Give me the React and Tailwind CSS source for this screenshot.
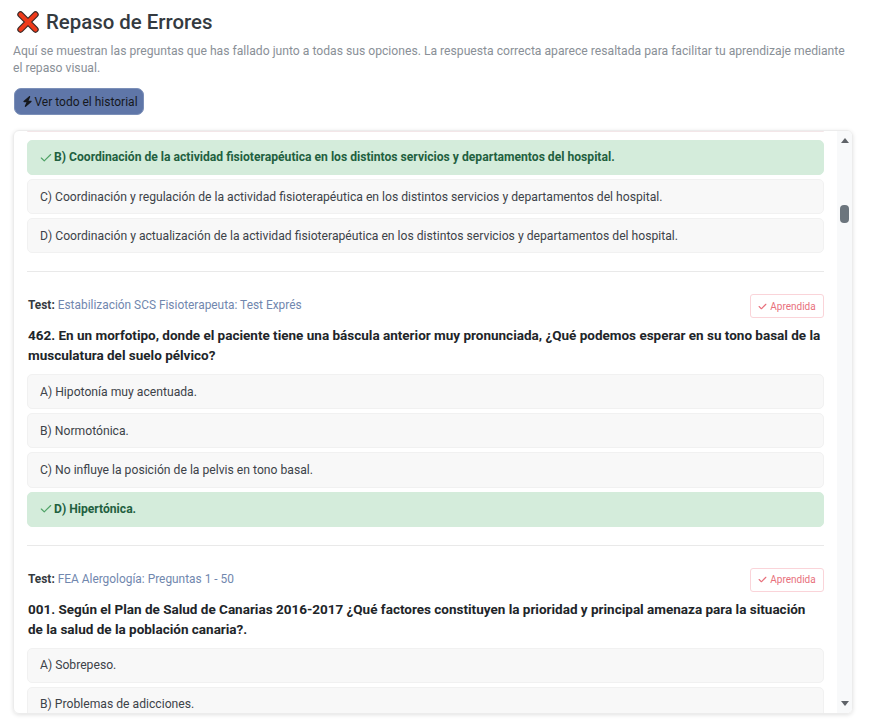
import { FaBolt, FaCheck } from 'react-icons/fa6';
import { Check } from 'lucide-react';

const questions = [
  {
    test: 'Estabilización SCS Fisioterapeuta: Test Exprés',
    title: '462. En un morfotipo, donde el paciente tiene una báscula anterior muy pronunciada, ¿Qué podemos esperar en su tono basal de la musculatura del suelo pélvico?',
    options: [
      { text: 'A) Hipotonía muy acentuada.' },
      { text: 'B) Normotónica.' },
      { text: 'C) No influye la posición de la pelvis en tono basal.' },
      { text: 'D) Hipertónica.', correct: true },
    ],
  },
  {
    test: 'FEA Alergología: Preguntas 1 - 50',
    title: '001. Según el Plan de Salud de Canarias 2016-2017 ¿Qué factores constituyen la prioridad y principal amenaza para la situación de la salud de la población canaria?.',
    options: [
      { text: 'A) Sobrepeso.' },
      { text: 'B) Problemas de adicciones.' },
    ],
  },
];

function Option({ text, correct }) {
  if (correct) {
    return (
      <div className="flex h-[35.1px] items-center rounded-[5px] border border-[#d4ecdb] bg-[#d4ecdb] px-3 text-[12.13px] font-bold text-[#22603f]">
        <Check className="mr-[1px] -ml-[1px] text-[#4fa266]" size={14} strokeWidth={2} />
        {text}
      </div>
    );
  }
  return (
    <div className="flex h-[35.1px] items-center rounded-[5px] border border-[#f1f1f1] bg-[#f8f8f8] px-3 text-[12.16px] text-[#3d4349]">
      {text}
    </div>
  );
}

function Question({ test, title, options }) {
  return (
    <div>
      <div className="flex h-[24px] items-center justify-between">
        <p className="pl-px text-[11.9px] text-[#7187ae]">
          <b className="font-bold text-[#343a40]">Test:</b> {test}
        </p>
        <span className="flex h-[24px] w-[74px] items-center justify-center gap-[3px] rounded-[3px] border border-[#fad4d9] text-[10px] text-[#e8707c]">
          <FaCheck size={9} />
          Aprendida
        </span>
      </div>
      <h3 className="mt-[7px] mr-[2px] mb-[9px] pl-px text-[13.5px] leading-[20px] font-bold text-[#212529]">{title}</h3>
      <div className="flex flex-col gap-1">
        {options.map((o) => (
          <Option key={o.text} {...o} />
        ))}
      </div>
    </div>
  );
}

export default function App() {
  return (
    <div className="min-h-screen bg-white px-[13px] font-['Roboto',sans-serif]">
      <div className="flex items-center pt-[10px]">
        <svg width="24" height="24" viewBox="0 0 24 24" className="ml-[3px]">
          <path d="M4.5 4.5 L19.5 19.5 M19.5 4.5 L4.5 19.5" fill="none" stroke="#3a2a28" strokeWidth="6.4" strokeLinecap="round" />
          <path d="M4.5 4.5 L19.5 19.5 M19.5 4.5 L4.5 19.5" fill="none" stroke="#ee3a1a" strokeWidth="4.2" strokeLinecap="round" />
        </svg>
        <h2 className="ml-[6px] text-[20.4px] leading-6 font-medium text-[#343a40]">Repaso de Errores</h2>
      </div>
      <p className="mt-[9px] pr-[20px] text-[12.16px] leading-[17px] text-[#8a9097]">
        Aquí se muestran las preguntas que has fallado junto a todas sus opciones. La respuesta correcta aparece resaltada para facilitar tu aprendizaje mediante el repaso visual.
      </p>
      <button className="mt-[11px] ml-px flex h-[27px] w-[130px] items-center justify-center gap-[1px] rounded-[7px] border border-[#7b8fb8] bg-[#5f76a8] pl-[2px] text-xs text-[#16181d]">
        <FaBolt size={11} />
        Ver todo el historial
      </button>
      <div className="mt-[15px] flex h-[584px] w-[840px] overflow-hidden rounded-[6px] border border-[#ececec] shadow-[0_1px_4px_rgba(0,0,0,0.12)]">
        <div className="min-w-0 flex-1 overflow-hidden px-[13px]">
          <div className="h-[1px] rounded-b border-b border-[#f3e6e8]" />
          <div className="mt-[8px] flex flex-col gap-1">
            <Option correct text="B) Coordinación de la actividad fisioterapéutica en los distintos servicios y departamentos del hospital." />
            <Option text="C) Coordinación y regulación de la actividad fisioterapéutica en los distintos servicios y departamentos del hospital." />
            <Option text="D) Coordinación y actualización de la actividad fisioterapéutica en los distintos servicios y departamentos del hospital." />
          </div>
          {questions.map((q) => (
            <div key={q.test}>
              <hr className="mt-[18px] mb-[22px] border-[#e9e9e9]" />
              <Question {...q} />
            </div>
          ))}
        </div>
        <div className="flex w-[15px] shrink-0 flex-col items-center bg-[#f8f9fa]">
          <div className="mt-[7px] h-0 w-0 border-x-[4px] border-b-[5px] border-x-transparent border-b-[#5f6368]" />
          <div className="mt-[62px] h-[18px] w-[9px] rounded-[4px] bg-[#6c757d]" />
          <div className="mt-auto mb-[7px] h-0 w-0 border-x-[4px] border-t-[5px] border-x-transparent border-t-[#5f6368]" />
        </div>
      </div>
    </div>
  );
}
